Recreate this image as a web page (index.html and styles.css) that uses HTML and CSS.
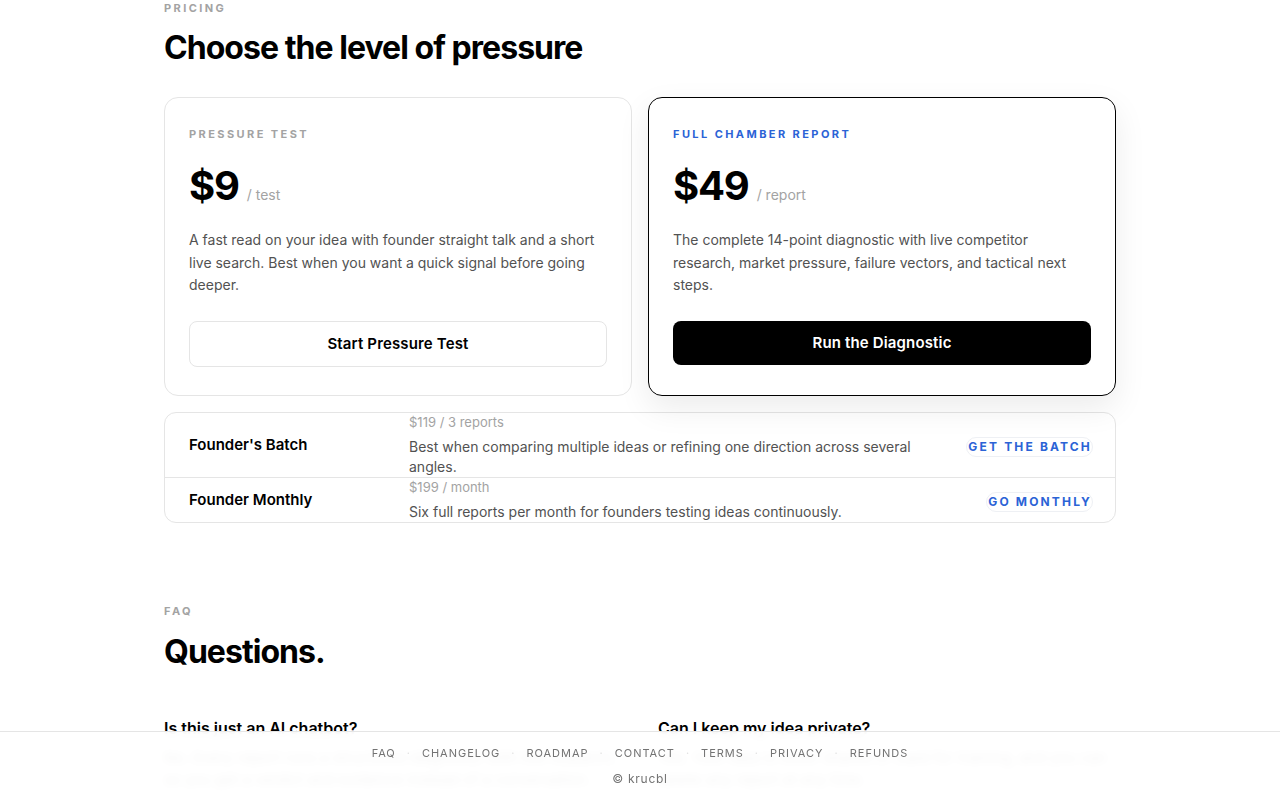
FILE: index.html
```html
<!DOCTYPE html>
<html lang="en">
<head>
    <meta charset="UTF-8">
    <meta name="viewport" content="width=device-width, initial-scale=1.0">
    <title>krucbl — Pricing</title>
    <link rel="stylesheet" href="styles.css">
</head>
<body>
    <main class="wrap">
        <section class="pricing">
            <div class="eyebrow">Pricing</div>
            <h2>Choose the level of pressure</h2>

            <div class="plans">
                <div class="plan">
                    <div class="plan-label">Pressure Test</div>
                    <div class="price">
                        <span class="amount">$9</span>
                        <span class="per">/ test</span>
                    </div>
                    <p class="plan-desc">A fast read on your idea with founder straight talk and a short live search. Best when you want a quick signal before going deeper.</p>
                    <a href="#" class="btn btn-outline">Start Pressure Test</a>
                </div>
                <div class="plan plan-featured">
                    <div class="plan-label">Full Chamber Report</div>
                    <div class="price">
                        <span class="amount">$49</span>
                        <span class="per">/ report</span>
                    </div>
                    <p class="plan-desc">The complete 14-point diagnostic with live competitor research, market pressure, failure vectors, and tactical next steps.</p>
                    <a href="#" class="btn btn-dark">Run the Diagnostic</a>
                </div>
            </div>

            <div class="bundles">
                <div class="bundle">
                    <div class="bundle-name">Founder's Batch</div>
                    <div class="bundle-info">
                        <div class="bundle-price">$119 / 3 reports</div>
                        <div class="bundle-desc">Best when comparing multiple ideas or refining one direction across several angles.</div>
                    </div>
                    <a href="#" class="bundle-link">Get the batch</a>
                </div>
                <div class="bundle">
                    <div class="bundle-name">Founder Monthly</div>
                    <div class="bundle-info">
                        <div class="bundle-price">$199 / month</div>
                        <div class="bundle-desc">Six full reports per month for founders testing ideas continuously.</div>
                    </div>
                    <a href="#" class="bundle-link">Go monthly</a>
                </div>
            </div>
        </section>

        <section class="faq">
            <div class="eyebrow">FAQ</div>
            <h2>Questions.</h2>
            <div class="faq-grid">
                <div class="faq-item">
                    <h3>Is this just an AI chatbot?</h3>
                    <p>No. Every report runs a structured diagnostic with live research, so you get a verdict and evidence instead of a conversation.</p>
                </div>
                <div class="faq-item">
                    <h3>Can I keep my idea private?</h3>
                    <p>Yes. Your idea is never shared or used for training, and you can delete any report at any time.</p>
                </div>
            </div>
        </section>
    </main>

    <footer class="site-footer">
        <nav class="footer-links">
            <a href="#">FAQ</a><span class="sep">·</span>
            <a href="#">Changelog</a><span class="sep">·</span>
            <a href="#">Roadmap</a><span class="sep">·</span>
            <a href="#">Contact</a><span class="sep">·</span>
            <a href="#">Terms</a><span class="sep">·</span>
            <a href="#">Privacy</a><span class="sep">·</span>
            <a href="#">Refunds</a>
        </nav>
        <div class="copyright">© krucbl</div>
    </footer>
</body>
</html>
```

FILE: styles.css
```css
body, html {
    margin: 0;
    padding: 0;
    font-family: Inter, "Noto Sans", sans-serif;
    background: #fff;
    color: #0a0a0a;
}
a {
    text-decoration: none;
    color: inherit;
}
.wrap {
    width: 952px;
    margin: 0 auto;
    padding-bottom: 120px;
}
.eyebrow {
    font-size: 11px;
    line-height: 16px;
    font-weight: 700;
    letter-spacing: 0.22em;
    text-transform: uppercase;
    color: #a3a3a3;
}
h2 {
    margin: 13px 0 0;
    font-size: 32px;
    line-height: 38px;
    font-weight: 700;
    letter-spacing: -0.03em;
    color: #000;
}
.plans {
    display: grid;
    grid-template-columns: 1fr 1fr;
    gap: 16px;
    margin-top: 30px;
}
.plan {
    border: 1px solid #e5e5e5;
    border-radius: 14px;
    padding: 28px 24px;
    display: flex;
    flex-direction: column;
    background: #fff;
}
.plan-featured {
    border-color: #000;
    box-shadow: 0 12px 32px rgba(0, 0, 0, 0.08);
}
.plan-label {
    font-size: 11px;
    line-height: 16px;
    font-weight: 700;
    letter-spacing: 0.22em;
    text-transform: uppercase;
    color: #a3a3a3;
}
.plan-featured .plan-label {
    color: #2b63d6;
}
.price {
    display: flex;
    align-items: baseline;
    gap: 8px;
    margin-top: 24px;
}
.amount {
    font-size: 40px;
    line-height: 40px;
    font-weight: 700;
    letter-spacing: -0.03em;
    color: #000;
}
.per {
    font-size: 14px;
    color: #a3a3a3;
}
.plan-desc {
    margin: 23px 0 0;
    font-size: 14px;
    line-height: 22.5px;
    color: #525252;
}
.btn {
    display: block;
    margin-top: 24px;
    text-align: center;
    font-size: 15px;
    line-height: 20px;
    font-weight: 600;
    letter-spacing: 0.01em;
    border-radius: 8px;
    padding: 12px;
}
.btn-outline {
    border: 1px solid #e5e5e5;
    color: #000;
}
.btn-dark {
    background: #000;
    color: #fff;
}
.bundles {
    margin-top: 16px;
    border: 1px solid #e5e5e5;
    border-radius: 12px;
}
.bundle {
    display: grid;
    grid-template-columns: 196px 1fr auto;
    gap: 24px;
    align-items: center;
    padding: 0 24px;
}
.bundle + .bundle {
    border-top: 1px solid #e5e5e5;
}
.bundle-name {
    font-size: 15px;
    font-weight: 600;
    color: #000;
}
.bundle-price {
    font-size: 13px;
    line-height: 18px;
    color: #a3a3a3;
}
.bundle-desc {
    margin-top: 6px;
    font-size: 14px;
    line-height: 20px;
    color: #525252;
}
.bundle-link {
    font-size: 12px;
    line-height: 16px;
    font-weight: 700;
    letter-spacing: 0.18em;
    text-transform: uppercase;
    color: #2b63d6;
    border: 1px solid #eef0f4;
    border-radius: 999px;
    padding: 1px 0 1px 1px;
    margin: 4px -2px 0 0;
}
.faq {
    margin-top: 80px;
}
.faq h2 {
    margin-top: 14px;
}
.faq-grid {
    display: grid;
    grid-template-columns: 1fr 1fr;
    gap: 36px;
    margin-top: 45px;
}
.faq-item h3 {
    margin: 0;
    font-size: 16px;
    line-height: 24px;
    font-weight: 600;
    color: #000;
}
.faq-item p {
    margin: 7px 0 0;
    font-size: 15px;
    line-height: 22px;
    color: #525252;
}
.site-footer {
    position: fixed;
    left: 0;
    right: 0;
    bottom: 0;
    border-top: 1px solid #e5e5e5;
    background: rgba(255, 255, 255, 0.94);
    backdrop-filter: blur(4px);
    padding: 13px 0;
    text-align: center;
}
.footer-links {
    display: flex;
    justify-content: center;
    align-items: center;
    gap: 11px;
    font-size: 11px;
    line-height: 16px;
    letter-spacing: 0.09em;
    text-transform: uppercase;
    color: #737373;
}
.sep {
    color: #e0e0e0;
}
.copyright {
    margin-top: 10px;
    font-size: 12px;
    line-height: 16px;
    letter-spacing: 0.06em;
    color: #737373;
}
```
